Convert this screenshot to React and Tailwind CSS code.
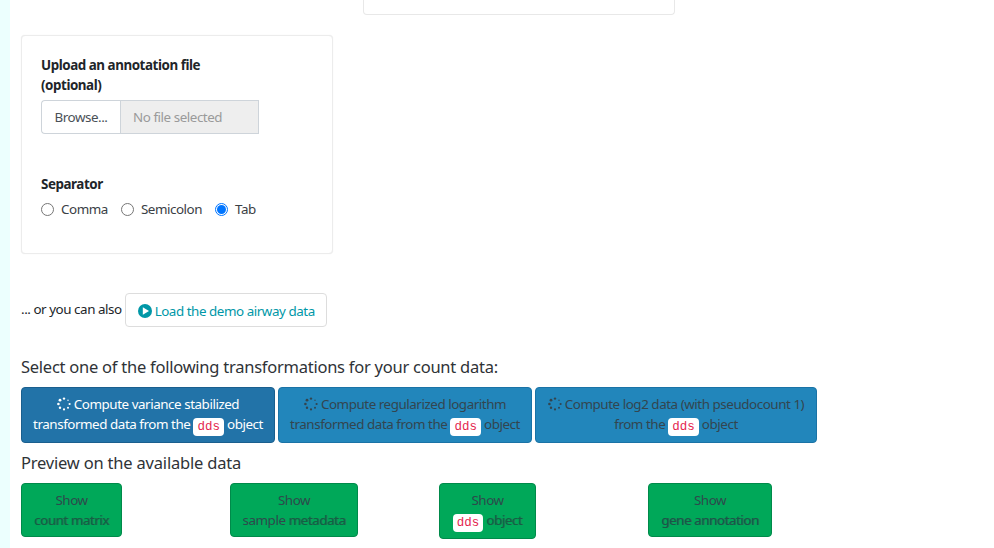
import React from "react";

function Spinner({ color }) {
  // ring of shrinking dots, same as the busy icon on the buttons
  const dots = [
    [7, 1.6, 1.2],
    [11, 3.2, 0.7],
    [12.6, 7, 1.1],
    [11, 10.8, 1],
    [7, 12.4, 1.1],
    [3, 10.8, 1.2],
    [1.4, 7, 1.3],
    [3, 3.2, 1.4],
  ];
  return (
    <svg width="14" height="14" viewBox="0 0 14 14" className="inline-block align-[-2px] mr-[3px]">
      {dots.map(([x, y, r], i) => (
        <circle key={i} cx={x} cy={y} r={r} fill={color} />
      ))}
    </svg>
  );
}

function PlayIcon() {
  return (
    <svg width="14" height="14" viewBox="0 0 14 14" className="shrink-0 ml-[1px]">
      <circle cx="7" cy="7" r="7" fill="#0097a7" />
      <path d="M4.8 3.2 L11 7 L4.8 10.8 Z" fill="#ffffff" />
    </svg>
  );
}

function Dds() {
  return (
    <code className="inline-block bg-white text-[#e4264f] rounded-[4px] px-[4px] h-[18px] leading-[18px] text-[12.5px] tracking-normal font-['Liberation_Mono',monospace] align-[-1px]">
      dds
    </code>
  );
}

function Radio({ label, checked }) {
  return (
    <label className="flex items-center gap-[7px]">
      {checked ? (
        <span className="w-[13px] h-[13px] rounded-full border-[1px] border-[#0075ff] flex items-center justify-center">
          <span className="w-[9px] h-[9px] rounded-full bg-[#0075ff]"></span>
        </span>
      ) : (
        <span className="w-[13px] h-[13px] rounded-full border-[1px] border-[#767676] bg-white"></span>
      )}
      <span>{label}</span>
    </label>
  );
}

function BlueButton({ active, width, children }) {
  return (
    <button
      className={
        "h-[56px] rounded-[4px] border text-center leading-[20px] " +
        width +
        (active
          ? " bg-[#2273a8] border-[#1a5f8e] text-white"
          : " bg-[#2286bb] border-[#1a73a6] text-[#33454f]")
      }
    >
      {children}
    </button>
  );
}

function GreenButton({ width, height, children }) {
  return (
    <button className={"rounded-[4px] border border-[#008a4a] bg-[#00a859] text-[#2e4a4c] text-center leading-[20px] " + width + " " + height}>
      {children}
    </button>
  );
}

export default function App() {
  return (
    <div className="flex w-full h-[548px] overflow-hidden bg-white font-['Noto_Sans',sans-serif] text-[13.4px] tracking-[-0.45px] text-[#212529]">
      <div className="w-[10px] shrink-0 bg-[#ecfffe]"></div>
      <main className="flex-1 pl-[11px] flex flex-col">
        <div className="pl-[342px]">
          <div className="w-[312px] h-[15px] bg-white border border-t-0 border-[#e8e8e8] rounded-b-[4px]"></div>
        </div>

        <section className="mt-[20px] w-[312px] h-[219px] border border-[#ececec] rounded-[4px] bg-white pt-[19px] pl-[19px] shadow-[0_0_1px_#e5e5e5]">
          <div className="font-bold leading-[20px] w-[200px]">Upload an annotation file (optional)</div>
          <div className="flex mt-[5px] w-[218px] h-[34px]">
            <div className="w-[79px] pt-[1px] border border-[#ced4da] border-r-0 rounded-l-[4px] flex items-center justify-center text-[#495057]">Browse...</div>
            <div className="flex-1 pt-[1px] bg-[#eeeeee] border border-[#ced4da] flex items-center pl-[12px] text-[#9a9a9a]">No file selected</div>
          </div>
          <div className="font-bold leading-[20px] mt-[40px]">Separator</div>
          <div className="flex gap-[13px] mt-[5px] leading-[20px] text-[#3a4045]">
            <Radio label="Comma" />
            <Radio label="Semicolon" />
            <Radio label="Tab" checked />
          </div>
        </section>

        <div className="mt-[39px] flex items-center h-[34px]">
          <span className="mr-[3px] -mt-[2px]">... or you can also</span>
          <button className="h-[34px] w-[202px] pt-[2px] border border-[#dddddd] rounded-[4px] bg-white text-[#0097a7] flex items-center justify-center gap-[3px]">
            <PlayIcon />
            Load the demo airway data
          </button>
        </div>

        <h4 className="mt-[27px] text-[16.5px] tracking-[-0.25px] leading-[26px] text-[#2f3337]">Select one of the following transformations for your count data:</h4>

        <div className="mt-[7px] flex gap-[3px]">
          <BlueButton active width="w-[254px]">
            <Spinner color="#ffffff" />Compute variance stabilized<br />
            transformed data from the <Dds /> object
          </BlueButton>
          <BlueButton width="w-[254px]">
            <Spinner color="#33454f" />Compute regularized logarithm<br />
            transformed data from the <Dds /> object
          </BlueButton>
          <BlueButton width="w-[282px]">
            <Spinner color="#33454f" />Compute log2 data (with pseudocount 1)<br />
            from the <Dds /> object
          </BlueButton>
        </div>

        <h4 className="mt-[7px] text-[16.5px] tracking-[-0.2px] leading-[26px] text-[#2f3337]">Preview on the available data</h4>

        <div className="mt-[7px] grid grid-cols-[repeat(4,209px)] items-start">
          <GreenButton width="w-[101px]" height="h-[54px]">
            Show<br /><span className="text-[#155f43] [text-shadow:1px_0_0_#1f7a55]">count matrix</span>
          </GreenButton>
          <GreenButton width="w-[128px]" height="h-[54px]">
            Show<br />sample <span className="text-[#155f43] [text-shadow:1px_0_0_#1f7a55]">metadata</span>
          </GreenButton>
          <GreenButton width="w-[97px]" height="h-[56px]">
            Show<br /><Dds /> <span className="text-[#155f43] [text-shadow:1px_0_0_#1f7a55]">object</span>
          </GreenButton>
          <GreenButton width="w-[124px]" height="h-[54px]">
            Show<br /><span className="text-[#1c5548] [text-shadow:1px_0_0_#1f7a55]">gene annotation</span>
          </GreenButton>
        </div>
      </main>
    </div>
  );
}
